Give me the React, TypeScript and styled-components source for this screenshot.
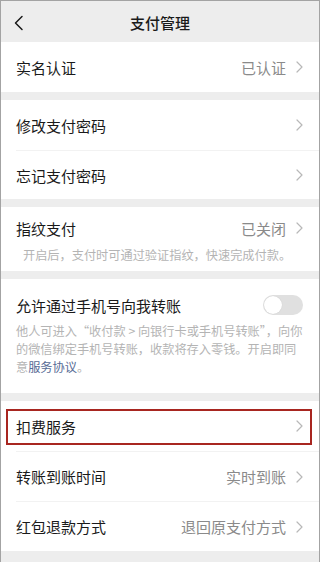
import React from "react";
import styled, { createGlobalStyle } from "styled-components";

const GlobalStyle = createGlobalStyle`
  html, body {
    margin: 0;
    padding: 0;
    background: #ededed;
  }
  * {
    box-sizing: border-box;
  }
`;

const Page = styled.div`
  width: 320px;
  height: 562px;
  overflow: hidden;
  background: #ededed;
  border: 1px solid #a3a3a3;
  border-bottom: none;
  font-family: "Noto Sans CJK SC", "Noto Sans", sans-serif;
  color: #1a1a1a;
  display: flex;
  flex-direction: column;
`;

const Header = styled.div`
  height: 41px;
  flex-shrink: 0;
  display: flex;
  align-items: center;
  justify-content: center;
  position: relative;
`;

const BackButton = styled.div`
  position: absolute;
  left: 12px;
  top: 14px;
  width: 12px;
  height: 16px;
  display: flex;
`;

const Title = styled.div`
  font-size: 15px;
  font-weight: 500;
  line-height: 20px;
  padding-top: 2px;
`;

const Group = styled.div`
  background: #fff;
  margin-bottom: 8px;
  position: relative;
`;

const Row = styled.div<{ $height?: number }>`
  height: ${(p) => p.$height || 50}px;
  display: flex;
  align-items: center;
  justify-content: space-between;
  padding: 0 16px 0 15px;
  position: relative;
`;

const Divider = styled.div`
  height: 1px;
  margin-left: 15px;
  background: #f2f2f2;
`;

const Label = styled.span`
  font-size: 15px;
  line-height: 20px;
  padding-top: 1px;
`;

const Right = styled.div`
  display: flex;
  align-items: center;
  gap: 10px;
`;

const Value = styled.span`
  font-size: 15px;
  line-height: 20px;
  color: #8a8a8a;
  padding-top: 1px;
`;

const Block = styled.div<{ $top: number; $bottom: number }>`
  padding: ${(p) => p.$top}px 16px ${(p) => p.$bottom}px 15px;
`;

const BlockHead = styled.div`
  display: flex;
  align-items: center;
  justify-content: space-between;
  height: 20px;
`;

const Desc = styled.div<{ $indent?: number; $gap: number }>`
  font-size: 12.2px;
  line-height: 18px;
  color: #b4b4b4;
  margin-top: ${(p) => p.$gap}px;
  margin-left: ${(p) => p.$indent || 0}px;
  white-space: nowrap;
`;

const Link = styled.span`
  color: #576b95;
`;

const Toggle = styled.div<{ $on?: boolean }>`
  width: 40px;
  height: 20px;
  border-radius: 10px;
  background: ${(p) => (p.$on ? "#07c160" : "#e0e0e0")};
  display: flex;
  align-items: center;
  padding: 1px;
  justify-content: ${(p) => (p.$on ? "flex-end" : "flex-start")};
`;

const Knob = styled.div`
  width: 18px;
  height: 18px;
  border-radius: 50%;
  background: #fff;
  box-shadow: 0 0 1px rgba(0, 0, 0, 0.15);
`;

const Highlight = styled.div`
  position: absolute;
  left: 5px;
  right: 7px;
  top: 8px;
  bottom: 6px;
  border: 2px solid #a82620;
  pointer-events: none;
`;

const Chevron = () => (
  <svg width="7" height="12" viewBox="0 0 7 12">
    <polyline
      points="1,1 6,6 1,11"
      fill="none"
      stroke="#b8b8b8"
      strokeWidth="1.2"
      strokeLinecap="round"
      strokeLinejoin="round"
    />
  </svg>
);

const BackIcon = () => (
  <svg width="12" height="16" viewBox="0 0 12 16">
    <polyline
      points="9,1.5 2.5,8 9,14.5"
      fill="none"
      stroke="#1a1a1a"
      strokeWidth="1.5"
      strokeLinecap="round"
      strokeLinejoin="round"
    />
  </svg>
);

interface ItemProps {
  label: string;
  value?: string;
  height?: number;
}

const Item = ({ label, value, height }: ItemProps) => (
  <Row $height={height}>
    <Label>{label}</Label>
    <Right>
      {value && <Value>{value}</Value>}
      <Chevron />
    </Right>
  </Row>
);

export default function App() {
  return (
    <>
      <GlobalStyle />
      <Page>
        <Header>
          <BackButton>
            <BackIcon />
          </BackButton>
          <Title>支付管理</Title>
        </Header>

        <Group>
          <Item label="实名认证" value="已认证" height={50} />
        </Group>

        <Group>
          <Item label="修改支付密码" />
          <Divider />
          <Item label="忘记支付密码" height={48} />
        </Group>

        <Group>
          <Block $top={11} $bottom={7}>
            <BlockHead>
              <Label>指纹支付</Label>
              <Right>
                <Value>已关闭</Value>
                <Chevron />
              </Right>
            </BlockHead>
            <Desc $indent={7} $gap={8}>
              开启后，支付时可通过验证指纹，快速完成付款。
            </Desc>
          </Block>
        </Group>

        <Group>
          <Block $top={16} $bottom={17}>
            <BlockHead>
              <Label>允许通过手机号向我转账</Label>
              <Toggle>
                <Knob />
              </Toggle>
            </BlockHead>
            <Desc $gap={7}>
              他人可进入“收付款 &gt; 向银行卡或手机号转账”，向你
              <br />
              的微信绑定手机号转账，收款将存入零钱。开启即同
              <br />
              意<Link>服务协议</Link>。
            </Desc>
          </Block>
        </Group>

        <Group>
          <Row>
            <Label>扣费服务</Label>
            <Right>
              <Chevron />
            </Right>
            <Highlight />
          </Row>
          <Divider />
          <Item label="转账到账时间" value="实时到账" height={49} />
          <Divider />
          <Item label="红包退款方式" value="退回原支付方式" height={49} />
        </Group>
      </Page>
    </>
  );
}
